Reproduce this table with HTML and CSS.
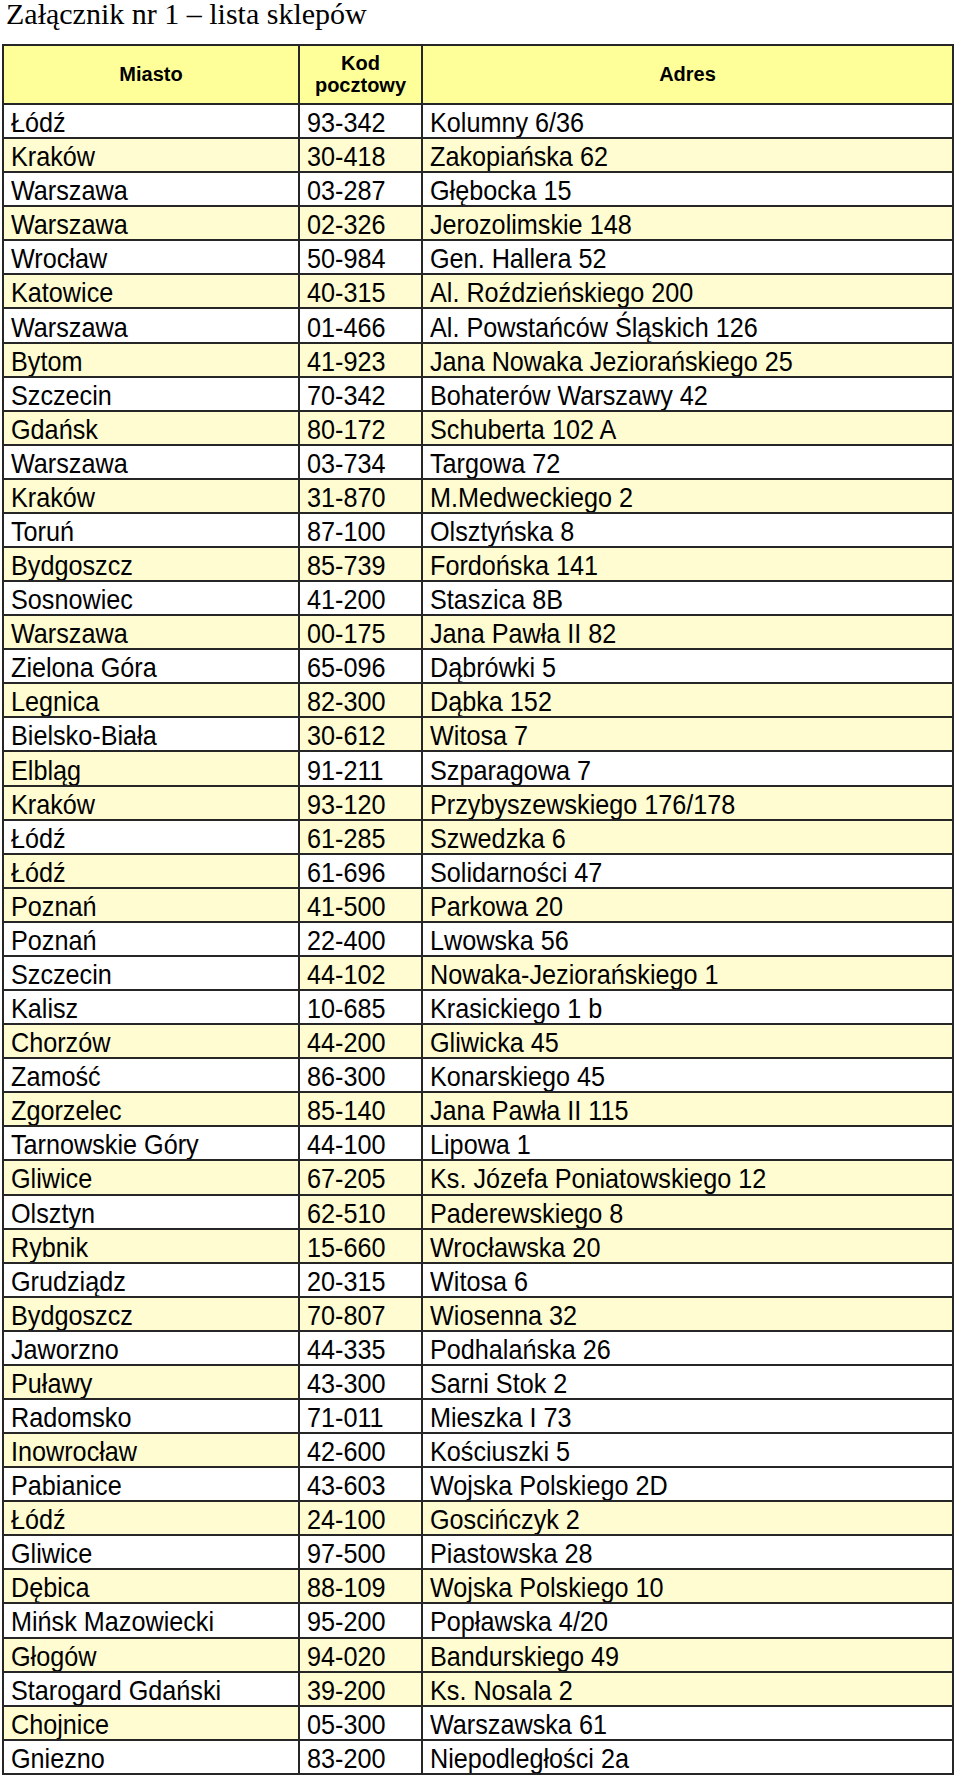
FILE: index.html
```html
<!DOCTYPE html>
<html lang="pl">
<head>
<meta charset="utf-8">
<title>Załącznik nr 1 – lista sklepów</title>
<link rel="stylesheet" href="styles.css">
</head>
<body>
<h1 class="title">Załącznik nr 1 – lista sklepów</h1>
<table class="shops">
<colgroup><col class="c1"><col class="c2"><col class="c3"></colgroup>
<thead>
<tr class="head"><th>Miasto</th><th>Kod<br>pocztowy</th><th>Adres</th></tr>
</thead>
<tbody>
<tr><td><span class="t">Łódź</span></td><td><span class="t">93-342</span></td><td><span class="t">Kolumny 6/36</span></td></tr>
<tr class="y"><td><span class="t">Kraków</span></td><td><span class="t">30-418</span></td><td><span class="t">Zakopiańska 62</span></td></tr>
<tr><td><span class="t">Warszawa</span></td><td><span class="t">03-287</span></td><td><span class="t">Głębocka 15</span></td></tr>
<tr class="y"><td><span class="t">Warszawa</span></td><td><span class="t">02-326</span></td><td><span class="t">Jerozolimskie 148</span></td></tr>
<tr><td><span class="t">Wrocław</span></td><td><span class="t">50-984</span></td><td><span class="t">Gen. Hallera 52</span></td></tr>
<tr class="y"><td><span class="t">Katowice</span></td><td><span class="t">40-315</span></td><td><span class="t">Al. Roździeńskiego 200</span></td></tr>
<tr><td><span class="t">Warszawa</span></td><td><span class="t">01-466</span></td><td><span class="t">Al. Powstańców Śląskich 126</span></td></tr>
<tr class="y"><td><span class="t">Bytom</span></td><td><span class="t">41-923</span></td><td><span class="t">Jana Nowaka Jeziorańskiego 25</span></td></tr>
<tr><td><span class="t">Szczecin</span></td><td><span class="t">70-342</span></td><td><span class="t">Bohaterów Warszawy 42</span></td></tr>
<tr class="y"><td><span class="t">Gdańsk</span></td><td><span class="t">80-172</span></td><td><span class="t">Schuberta 102 A</span></td></tr>
<tr><td><span class="t">Warszawa</span></td><td><span class="t">03-734</span></td><td><span class="t">Targowa 72</span></td></tr>
<tr class="y"><td><span class="t">Kraków</span></td><td><span class="t">31-870</span></td><td><span class="t">M.Medweckiego 2</span></td></tr>
<tr><td><span class="t">Toruń</span></td><td><span class="t">87-100</span></td><td><span class="t">Olsztyńska 8</span></td></tr>
<tr class="y"><td><span class="t">Bydgoszcz</span></td><td><span class="t">85-739</span></td><td><span class="t">Fordońska 141</span></td></tr>
<tr><td><span class="t">Sosnowiec</span></td><td><span class="t">41-200</span></td><td><span class="t">Staszica 8B</span></td></tr>
<tr class="y"><td><span class="t">Warszawa</span></td><td><span class="t">00-175</span></td><td><span class="t">Jana Pawła II 82</span></td></tr>
<tr><td><span class="t">Zielona Góra</span></td><td><span class="t">65-096</span></td><td><span class="t">Dąbrówki 5</span></td></tr>
<tr class="y"><td><span class="t">Legnica</span></td><td><span class="t">82-300</span></td><td><span class="t">Dąbka 152</span></td></tr>
<tr><td><span class="t">Bielsko-Biała</span></td><td class="y"><span class="t">30-612</span></td><td class="y"><span class="t">Witosa 7</span></td></tr>
<tr><td class="y"><span class="t">Elbląg</span></td><td><span class="t">91-211</span></td><td><span class="t">Szparagowa 7</span></td></tr>
<tr class="y"><td><span class="t">Kraków</span></td><td><span class="t">93-120</span></td><td><span class="t">Przybyszewskiego 176/178</span></td></tr>
<tr><td><span class="t">Łódź</span></td><td class="y"><span class="t">61-285</span></td><td class="y"><span class="t">Szwedzka 6</span></td></tr>
<tr><td class="y"><span class="t">Łódź</span></td><td><span class="t">61-696</span></td><td><span class="t">Solidarności 47</span></td></tr>
<tr class="y"><td><span class="t">Poznań</span></td><td><span class="t">41-500</span></td><td><span class="t">Parkowa 20</span></td></tr>
<tr><td><span class="t">Poznań</span></td><td><span class="t">22-400</span></td><td><span class="t">Lwowska 56</span></td></tr>
<tr><td><span class="t">Szczecin</span></td><td class="y"><span class="t">44-102</span></td><td class="y"><span class="t">Nowaka-Jeziorańskiego 1</span></td></tr>
<tr><td><span class="t">Kalisz</span></td><td><span class="t">10-685</span></td><td><span class="t">Krasickiego 1 b</span></td></tr>
<tr class="y"><td><span class="t">Chorzów</span></td><td><span class="t">44-200</span></td><td><span class="t">Gliwicka 45</span></td></tr>
<tr><td><span class="t">Zamość</span></td><td><span class="t">86-300</span></td><td><span class="t">Konarskiego 45</span></td></tr>
<tr class="y"><td><span class="t">Zgorzelec</span></td><td><span class="t">85-140</span></td><td><span class="t">Jana Pawła II 115</span></td></tr>
<tr><td><span class="t">Tarnowskie Góry</span></td><td><span class="t">44-100</span></td><td><span class="t">Lipowa 1</span></td></tr>
<tr class="y"><td><span class="t">Gliwice</span></td><td><span class="t">67-205</span></td><td><span class="t">Ks. Józefa Poniatowskiego 12</span></td></tr>
<tr><td><span class="t">Olsztyn</span></td><td class="y"><span class="t">62-510</span></td><td class="y"><span class="t">Paderewskiego 8</span></td></tr>
<tr class="y"><td><span class="t">Rybnik</span></td><td><span class="t">15-660</span></td><td><span class="t">Wrocławska 20</span></td></tr>
<tr><td><span class="t">Grudziądz</span></td><td><span class="t">20-315</span></td><td><span class="t">Witosa 6</span></td></tr>
<tr class="y"><td><span class="t">Bydgoszcz</span></td><td><span class="t">70-807</span></td><td><span class="t">Wiosenna 32</span></td></tr>
<tr><td><span class="t">Jaworzno</span></td><td><span class="t">44-335</span></td><td><span class="t">Podhalańska 26</span></td></tr>
<tr><td class="y"><span class="t">Puławy</span></td><td><span class="t">43-300</span></td><td><span class="t">Sarni Stok 2</span></td></tr>
<tr><td><span class="t">Radomsko</span></td><td><span class="t">71-011</span></td><td><span class="t">Mieszka I 73</span></td></tr>
<tr><td class="y"><span class="t">Inowrocław</span></td><td><span class="t">42-600</span></td><td><span class="t">Kościuszki 5</span></td></tr>
<tr><td><span class="t">Pabianice</span></td><td><span class="t">43-603</span></td><td><span class="t">Wojska Polskiego 2D</span></td></tr>
<tr class="y"><td><span class="t">Łódź</span></td><td><span class="t">24-100</span></td><td><span class="t">Goscińczyk 2</span></td></tr>
<tr><td><span class="t">Gliwice</span></td><td><span class="t">97-500</span></td><td><span class="t">Piastowska 28</span></td></tr>
<tr class="y"><td><span class="t">Dębica</span></td><td><span class="t">88-109</span></td><td><span class="t">Wojska Polskiego 10</span></td></tr>
<tr><td><span class="t">Mińsk Mazowiecki</span></td><td><span class="t">95-200</span></td><td><span class="t">Popławska 4/20</span></td></tr>
<tr class="y"><td><span class="t">Głogów</span></td><td><span class="t">94-020</span></td><td><span class="t">Bandurskiego 49</span></td></tr>
<tr><td><span class="t">Starogard Gdański</span></td><td class="y"><span class="t">39-200</span></td><td class="y"><span class="t">Ks. Nosala 2</span></td></tr>
<tr><td class="y"><span class="t">Chojnice</span></td><td><span class="t">05-300</span></td><td><span class="t">Warszawska 61</span></td></tr>
<tr><td><span class="t">Gniezno</span></td><td><span class="t">83-200</span></td><td><span class="t">Niepodległości 2a</span></td></tr>
</tbody>
</table>
</body>
</html>
```
FILE: styles.css
```css
html, body {
  margin: 0;
  padding: 0;
  background: #ffffff;
}
body {
  padding: 0 0 0 2px;
  color: #000;
}
.title {
  margin: 0 0 16px 4px;
  font-family: "Liberation Serif", "DejaVu Serif", serif;
  font-weight: normal;
  font-size: 30px;
  line-height: 28px;
  white-space: nowrap;
}
.shops {
  border-collapse: separate;
  border-spacing: 0;
  table-layout: fixed;
  width: 952px;
  border-left: 2px solid #262626;
  border-top: 2px solid #262626;
  font-family: "Liberation Sans", Arial, sans-serif;
}
.c1 { width: 296px; }
.c2 { width: 123px; }
.c3 { width: 531px; }
.shops th, .shops td {
  border-right: 2px solid #262626;
  border-bottom: 2px solid #262626;
  padding: 0;
}
.shops th {
  height: 57px;
  background: #ffff99;
  font-size: 20px;
  font-weight: bold;
  line-height: 21.5px;
  text-align: center;
  vertical-align: middle;
}
.shops td {
  height: 34.08px;
  box-sizing: border-box;
  padding: 4px 0 0 7px;
  font-size: 28px;
  line-height: 28px;
  vertical-align: middle;
  white-space: nowrap;
  overflow: hidden;
  background: #ffffff;
}
.shops tr.y td, .shops td.y {
  background: #fefcd0;
}
.t {
  display: inline-block;
  transform: scaleX(0.9);
  transform-origin: 0 50%;
}
```
